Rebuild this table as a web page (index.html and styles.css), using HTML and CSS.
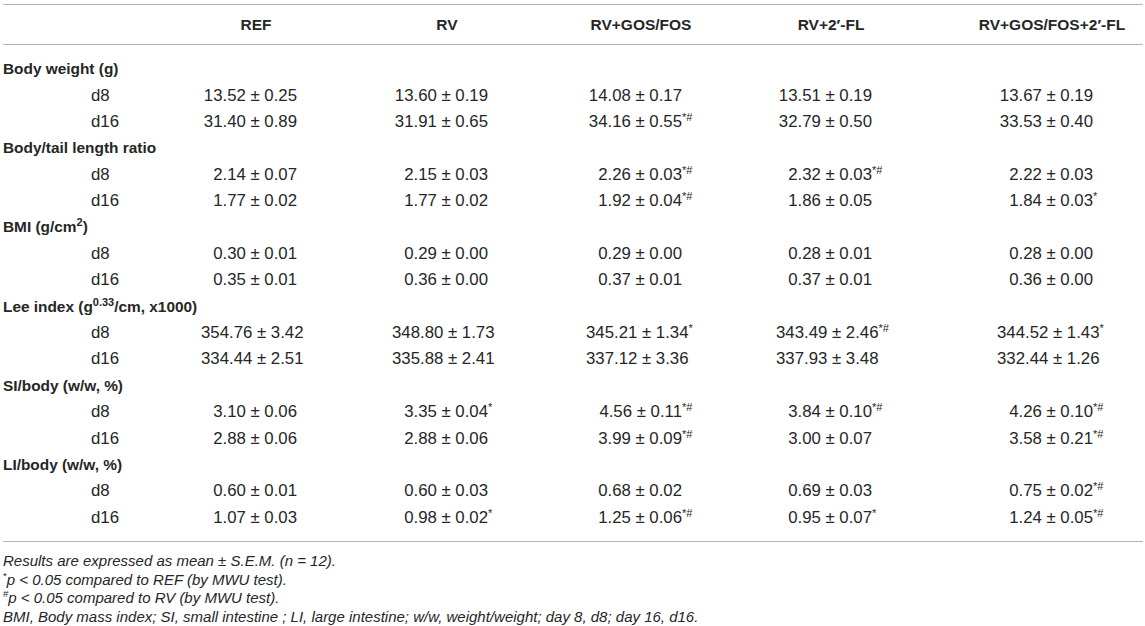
FILE: index.html
```html
<!DOCTYPE html>
<html>
<head>
<meta charset="utf-8">
<link rel="stylesheet" href="styles.css">
</head>
<body>
<div class="page">
  <div class="table">
    <div class="row head">
      <div class="cell lab"></div>
      <div class="cell h">REF</div>
      <div class="cell h">RV</div>
      <div class="cell h">RV+GOS/FOS</div>
      <div class="cell h">RV+2′-FL</div>
      <div class="cell h">RV+GOS/FOS+2′-FL</div>
    </div>
    <div class="body">
      <div class="row group">Body weight (g)</div>
      <div class="row">
        <div class="cell day">d8</div>
        <div class="cell v"><span class="num">13.52 ± 0.25</span></div>
        <div class="cell v"><span class="num">13.60 ± 0.19</span></div>
        <div class="cell v"><span class="num">14.08 ± 0.17</span></div>
        <div class="cell v"><span class="num">13.51 ± 0.19</span></div>
        <div class="cell v"><span class="num">13.67 ± 0.19</span></div>
      </div>
      <div class="row">
        <div class="cell day">d16</div>
        <div class="cell v"><span class="num">31.40 ± 0.89</span></div>
        <div class="cell v"><span class="num">31.91 ± 0.65</span></div>
        <div class="cell v"><span class="num">34.16 ± 0.55<sup class="mk">*#</sup></span></div>
        <div class="cell v"><span class="num">32.79 ± 0.50</span></div>
        <div class="cell v"><span class="num">33.53 ± 0.40</span></div>
      </div>

      <div class="row group">Body/tail length ratio</div>
      <div class="row">
        <div class="cell day">d8</div>
        <div class="cell v"><span class="num">2.14 ± 0.07</span></div>
        <div class="cell v"><span class="num">2.15 ± 0.03</span></div>
        <div class="cell v"><span class="num">2.26 ± 0.03<sup class="mk">*#</sup></span></div>
        <div class="cell v"><span class="num">2.32 ± 0.03<sup class="mk">*#</sup></span></div>
        <div class="cell v"><span class="num">2.22 ± 0.03</span></div>
      </div>
      <div class="row">
        <div class="cell day">d16</div>
        <div class="cell v"><span class="num">1.77 ± 0.02</span></div>
        <div class="cell v"><span class="num">1.77 ± 0.02</span></div>
        <div class="cell v"><span class="num">1.92 ± 0.04<sup class="mk">*#</sup></span></div>
        <div class="cell v"><span class="num">1.86 ± 0.05</span></div>
        <div class="cell v"><span class="num">1.84 ± 0.03<sup class="mk">*</sup></span></div>
      </div>

      <div class="row group">BMI (g/cm<sup class="gs">2</sup>)</div>
      <div class="row">
        <div class="cell day">d8</div>
        <div class="cell v"><span class="num">0.30 ± 0.01</span></div>
        <div class="cell v"><span class="num">0.29 ± 0.00</span></div>
        <div class="cell v"><span class="num">0.29 ± 0.00</span></div>
        <div class="cell v"><span class="num">0.28 ± 0.01</span></div>
        <div class="cell v"><span class="num">0.28 ± 0.00</span></div>
      </div>
      <div class="row">
        <div class="cell day">d16</div>
        <div class="cell v"><span class="num">0.35 ± 0.01</span></div>
        <div class="cell v"><span class="num">0.36 ± 0.00</span></div>
        <div class="cell v"><span class="num">0.37 ± 0.01</span></div>
        <div class="cell v"><span class="num">0.37 ± 0.01</span></div>
        <div class="cell v"><span class="num">0.36 ± 0.00</span></div>
      </div>

      <div class="row group">Lee index (g<sup class="gs">0.33</sup>/cm, x1000)</div>
      <div class="row">
        <div class="cell day">d8</div>
        <div class="cell v"><span class="num">354.76 ± 3.42</span></div>
        <div class="cell v"><span class="num">348.80 ± 1.73</span></div>
        <div class="cell v"><span class="num">345.21 ± 1.34<sup class="mk">*</sup></span></div>
        <div class="cell v"><span class="num">343.49 ± 2.46<sup class="mk">*#</sup></span></div>
        <div class="cell v"><span class="num">344.52 ± 1.43<sup class="mk">*</sup></span></div>
      </div>
      <div class="row">
        <div class="cell day">d16</div>
        <div class="cell v"><span class="num">334.44 ± 2.51</span></div>
        <div class="cell v"><span class="num">335.88 ± 2.41</span></div>
        <div class="cell v"><span class="num">337.12 ± 3.36</span></div>
        <div class="cell v"><span class="num">337.93 ± 3.48</span></div>
        <div class="cell v"><span class="num">332.44 ± 1.26</span></div>
      </div>

      <div class="row group">SI/body (w/w, %)</div>
      <div class="row">
        <div class="cell day">d8</div>
        <div class="cell v"><span class="num">3.10 ± 0.06</span></div>
        <div class="cell v"><span class="num">3.35 ± 0.04<sup class="mk">*</sup></span></div>
        <div class="cell v"><span class="num">4.56 ± 0.11<sup class="mk">*#</sup></span></div>
        <div class="cell v"><span class="num">3.84 ± 0.10<sup class="mk">*#</sup></span></div>
        <div class="cell v"><span class="num">4.26 ± 0.10<sup class="mk">*#</sup></span></div>
      </div>
      <div class="row">
        <div class="cell day">d16</div>
        <div class="cell v"><span class="num">2.88 ± 0.06</span></div>
        <div class="cell v"><span class="num">2.88 ± 0.06</span></div>
        <div class="cell v"><span class="num">3.99 ± 0.09<sup class="mk">*#</sup></span></div>
        <div class="cell v"><span class="num">3.00 ± 0.07</span></div>
        <div class="cell v"><span class="num">3.58 ± 0.21<sup class="mk">*#</sup></span></div>
      </div>

      <div class="row group">LI/body (w/w, %)</div>
      <div class="row">
        <div class="cell day">d8</div>
        <div class="cell v"><span class="num">0.60 ± 0.01</span></div>
        <div class="cell v"><span class="num">0.60 ± 0.03</span></div>
        <div class="cell v"><span class="num">0.68 ± 0.02</span></div>
        <div class="cell v"><span class="num">0.69 ± 0.03</span></div>
        <div class="cell v"><span class="num">0.75 ± 0.02<sup class="mk">*#</sup></span></div>
      </div>
      <div class="row">
        <div class="cell day">d16</div>
        <div class="cell v"><span class="num">1.07 ± 0.03</span></div>
        <div class="cell v"><span class="num">0.98 ± 0.02<sup class="mk">*</sup></span></div>
        <div class="cell v"><span class="num">1.25 ± 0.06<sup class="mk">*#</sup></span></div>
        <div class="cell v"><span class="num">0.95 ± 0.07<sup class="mk">*</sup></span></div>
        <div class="cell v"><span class="num">1.24 ± 0.05<sup class="mk">*#</sup></span></div>
      </div>
    </div>
  </div>
  <div class="notes">
    <p>Results are expressed as mean ± S.E.M. (n = 12).</p>
    <p><sup class="ns">*</sup>p &lt; 0.05 compared to REF (by MWU test).</p>
    <p><sup class="ns">#</sup>p &lt; 0.05 compared to RV (by MWU test).</p>
    <p>BMI, Body mass index; SI, small intestine ; LI, large intestine; w/w, weight/weight; day 8, d8; day 16, d16.</p>
  </div>
</div>
</body>
</html>
```

FILE: styles.css
```css
html, body {
  margin: 0;
  padding: 0;
  background: #ffffff;
}

body {
  font-family: "Liberation Sans", Arial, sans-serif;
  color: #262626;
  font-size: 16.8px;
}

.page {
  padding: 4px 2px 0 3px;
  width: 1140px;
}

.table {
  border-top: 1px solid #b4b4b4;
  border-bottom: 1px solid #b4b4b4;
}

.row {
  display: grid;
  grid-template-columns: 196px 114px 268px 120px 260px 182px;
  align-items: center;
  height: 26.4px;
}

.head {
  height: 39px;
  border-bottom: 1px solid #b4b4b4;
  font-weight: bold;
  font-size: 15.5px;
}

.h {
  text-align: center;
  white-space: nowrap;
}

.body {
  padding: 11px 0 10px 0;
}

.group {
  display: block;
  line-height: 26.4px;
  font-weight: bold;
  font-size: 15.4px;
  white-space: nowrap;
}

.gs {
  font-size: 11px;
  line-height: 0;
  vertical-align: 6px;
}

.day {
  padding-left: 88px;
}

.v {
  display: flex;
  justify-content: center;
  padding-right: 14px;
}

.num {
  display: block;
  width: 96px;
  text-align: right;
  white-space: nowrap;
}

.mk {
  display: inline-block;
  width: 0;
  text-align: left;
  font-size: 11px;
  line-height: 0;
  vertical-align: 6px;
  white-space: nowrap;
}

.notes {
  margin-top: 10px;
  font-style: italic;
  font-size: 15px;
  line-height: 18.7px;
}

.notes p {
  margin: 0;
}

.ns {
  font-size: 9.5px;
  font-style: normal;
  line-height: 0;
  vertical-align: 6px;
}
```
